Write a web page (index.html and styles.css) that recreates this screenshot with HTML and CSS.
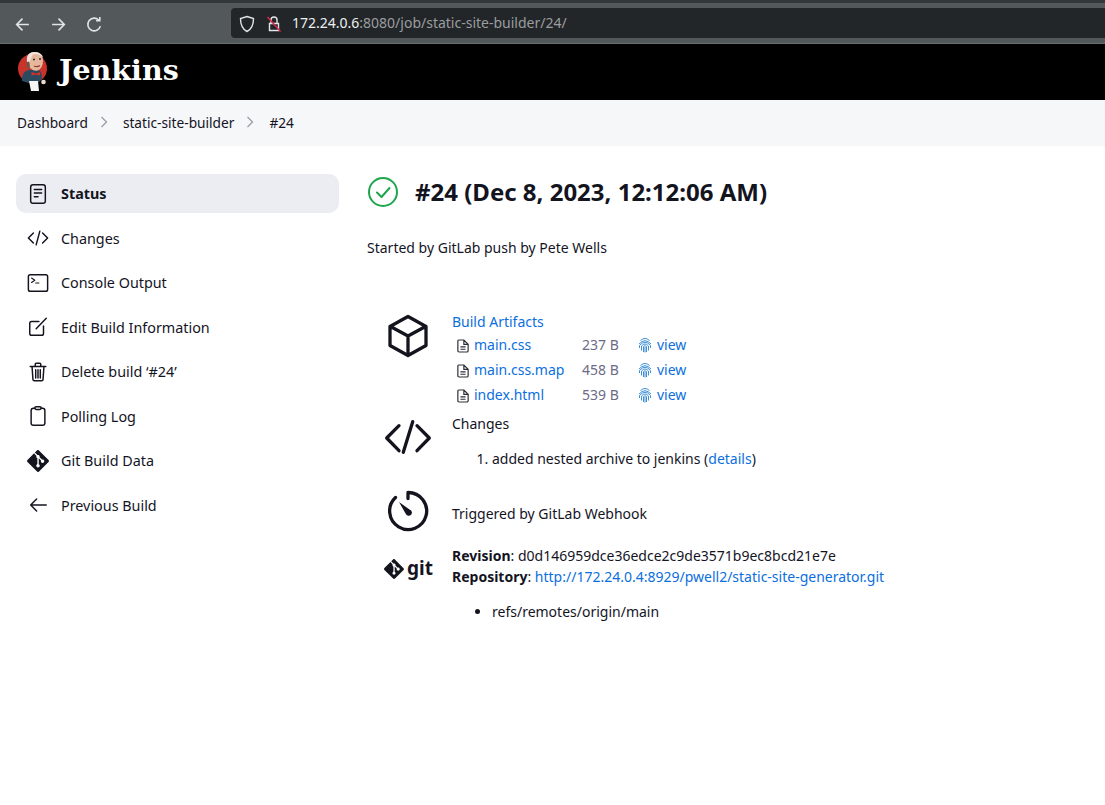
FILE: index.html
```html
<!DOCTYPE html>
<html lang="en">
<head>
    <meta charset="UTF-8">
    <meta name="viewport" content="width=device-width, initial-scale=1.0">
    <title>static-site-builder #24 [Jenkins]</title>
    <link rel="stylesheet" href="styles.css">
</head>
<body>
    <!-- browser chrome -->
    <div class="chrome">
        <div class="nav-btns">
            <svg class="chrome-icon" viewBox="0 0 16 16"><path d="M14 8H2.5M8 2.5 2.5 8 8 13.5"/></svg>
            <svg class="chrome-icon" viewBox="0 0 16 16"><path d="M2 8h11.500M8 2.500 13.500 8 8 13.500"/></svg>
            <svg class="chrome-icon" viewBox="0 0 16 16"><path d="M13.500 9.500A6 6 0 1 1 12 3.800M13 1v3.500H9.500"/></svg>
        </div>
        <div class="urlbar">
            <svg class="url-icon" viewBox="0 0 16 18"><path d="M8 1.500 14.500 3.500C14.500 10 13 14 8 16.500 3 14 1.500 10 1.500 3.500Z"/></svg>
            <svg class="url-icon lock" viewBox="0 0 16 18"><path d="M5 8V5a3 3 0 0 1 6 0v3M3.500 8.500h9v7h-9z"/><path class="slash" d="M1.500 2 14.500 16.500"/></svg>
            <span class="url"><span class="host">172.24.0.6</span>:8080/job/static-site-builder/24/</span>
        </div>
    </div>

    <header class="topbar">
        <svg class="logo" viewBox="0 0 30 40">
            <circle cx="14.500" cy="17.500" r="14.500" fill="#c8332b"/>
            <path d="M4 30c0-7 2-10 7-11h9c3 1 4 4 4 8l-3 4-8 0-2 1z" fill="#2b4a5f"/>
            <path d="M9 9.500C8.500 3.500 12 .8 17 1c5 .2 8 3.500 8 8.500 0 4-1 7-3.500 9-2.500 1.800-6 1.500-8-.5-2.500-1.500-4-4-4.500-8.500z" fill="#e6b79d"/>
            <path d="M9 11C8 4 12 .5 17 1c5 .2 7.500 3 8 5.500-3-3-7-4.500-10-3-1.500 1.500-2 5-3 6.500-.5 1-1.500 1.500-3 1z" fill="#efe3db"/>
            <path d="M9 11c-1 3 0 6 2.500 8 .5-3 .5-6-.5-8.500z" fill="#6d5449"/>
            <path d="M15 8.500h2M21 8h2" stroke="#3a2a24" stroke-width="1.300" fill="none"/>
            <path d="M16 15q3 1.500 6-.5" stroke="#8c3a30" stroke-width="1.200" fill="none"/>
            <path d="M13.500 21l4.500 1.500 4-1.500v3.500l-4-1-4.500 1z" fill="#d22f27"/>
            <path d="M11 30h9l1 10h-8z" fill="#f5f5f5"/>
            <circle cx="25.500" cy="31" r="2.300" fill="#e8ddd4"/>
        </svg>
        <span class="brand">Jenkins</span>
    </header>

    <nav class="crumbs">
        <a>Dashboard</a>
        <svg class="chev" viewBox="0 0 8 12"><path d="M1.500 1 6.500 6 1.500 11"/></svg>
        <a>static-site-builder</a>
        <svg class="chev" viewBox="0 0 8 12"><path d="M1.500 1 6.500 6 1.500 11"/></svg>
        <a>#24</a>
    </nav>

    <div class="page">
        <aside class="side">
            <a class="task active">
                <svg class="ti" viewBox="0 0 24 24"><rect x="4" y="2" width="16" height="20" rx="2.500"/><path d="M8 7h8M8 11h8M8 15h4"/></svg>
                <span>Status</span>
            </a>
            <a class="task">
                <svg class="ti" viewBox="0 0 24 24"><path d="M7 6.500 1.500 12 7 17.500M17 6.500 22.500 12 17 17.500M14 4.500 10 19.500"/></svg>
                <span>Changes</span>
            </a>
            <a class="task">
                <svg class="ti" viewBox="0 0 24 24"><rect x="1.500" y="3" width="21" height="18" rx="2"/><path d="M5 6.500 8.500 9 5 11.500M9.500 12H13" class="thin"/></svg>
                <span>Console Output</span>
            </a>
            <a class="task">
                <svg class="ti" viewBox="0 0 24 24"><path d="M13 6H5a2 2 0 0 0-2 2v11a2 2 0 0 0 2 2h11a2 2 0 0 0 2-2v-8"/><path d="M10 14 21 2.500"/></svg>
                <span>Edit Build Information</span>
            </a>
            <a class="task">
                <svg class="ti" viewBox="0 0 24 24"><path d="M3.500 6h17M9 6V3.500q0-1 1-1h4q1 0 1 1V6M5.500 6l1 14q.1 1.500 1.500 1.500h8q1.400 0 1.500-1.500l1-14M9.500 9.500v9M12 9.500v9M14.500 9.500v9"/></svg>
                <span>Delete build ‘#24’</span>
            </a>
            <a class="task">
                <svg class="ti" viewBox="0 0 24 24"><path d="M8.500 3.500H7q-2.500 0-2.500 2.500v13.500q0 2.500 2.500 2.500h10q2.500 0 2.500-2.500V6q0-2.500-2.500-2.500h-1.500"/><rect x="8.500" y="1.800" width="7" height="3" rx="1.500"/></svg>
                <span>Polling Log</span>
            </a>
            <a class="task">
                <svg class="ti" viewBox="0 0 92 92"><path class="solid" d="M90 42 50 2c-2.500-2.500-6-2.500-8.500 0l-8.300 8.300 10.500 10.500c2.500-.8 5.300-.3 7.300 1.700s2.500 4.900 1.700 7.400l10.100 10.100c2.500-.8 5.400-.3 7.400 1.700 2.800 2.800 2.800 7.300 0 10.100s-7.300 2.800-10.100 0c-2.100-2.100-2.600-5.200-1.500-7.800l-9.400-9.400v24.700c.7.300 1.300.8 1.900 1.300 2.800 2.800 2.800 7.300 0 10.100s-7.300 2.800-10.100 0-2.800-7.300 0-10.100c.7-.7 1.500-1.200 2.300-1.600V34.400c-.8-.4-1.600-.9-2.300-1.600-2.100-2.100-2.600-5.200-1.500-7.800L29.700 14 2 41.700c-2.500 2.500-2.500 6 0 8.500l40 40c2.500 2.500 6 2.500 8.500 0L90 50.500c2.500-2.500 2.500-6 0-8.500z"/></svg>
                <span>Git Build Data</span>
            </a>
            <a class="task">
                <svg class="ti" viewBox="0 0 24 24"><path d="M21 12H4M10.500 5.500 4 12l6.500 6.500"/></svg>
                <span>Previous Build</span>
            </a>
        </aside>

        <main class="main">
            <h1 class="title">
                <svg class="ok" viewBox="0 0 32 32"><circle cx="16" cy="16" r="14"/><path d="M10 16.500 14.500 21 22.500 12"/></svg>
                <span>#24 (Dec 8, 2023, 12:12:06 AM)</span>
            </h1>
            <p class="started">Started by GitLab push by Pete Wells</p>

            <div class="rows">
                <section class="row artifacts-row">
                    <svg class="big" viewBox="0 0 44 44"><path d="M22 2.500 40 12.500v19L22 41.500 4 31.500v-19zM4.500 12.500 22 22l17.500-9.500M22 22v19"/></svg>
                    <div class="body">
                        <a class="link">Build Artifacts</a>
                        <table class="files">
                            <tr>
                                <td class="f-ic"><svg class="doc" viewBox="0 0 14 16"><path d="M2 1h6l5 5v7.500q0 1.500-1.500 1.500h-9Q1 15 1 13.500V2.500Q1 1 2 1zM8 1v5h5M4 9h6M4 11.800h6"/></svg></td>
                                <td class="f-name"><a class="link">main.css</a></td>
                                <td class="f-size">237 B</td>
                                <td class="f-view"><svg class="fp" viewBox="0 0 14 16"><path d="M2.500 3.500Q7-.5 11.500 3.500M1 7Q7 .5 13 7M1.500 11V8.500Q7 2 12.500 8.500V11M3.500 13.500V9Q7 5 10.500 9v4.500M5.500 15V9.500Q7 8 8.500 9.500V15M7 10v5.500"/></svg><a class="link">view</a></td>
                            </tr>
                            <tr>
                                <td class="f-ic"><svg class="doc" viewBox="0 0 14 16"><path d="M2 1h6l5 5v7.500q0 1.500-1.500 1.500h-9Q1 15 1 13.500V2.500Q1 1 2 1zM8 1v5h5M4 9h6M4 11.800h6"/></svg></td>
                                <td class="f-name"><a class="link">main.css.map</a></td>
                                <td class="f-size">458 B</td>
                                <td class="f-view"><svg class="fp" viewBox="0 0 14 16"><path d="M2.500 3.500Q7-.5 11.500 3.500M1 7Q7 .5 13 7M1.500 11V8.500Q7 2 12.500 8.500V11M3.500 13.500V9Q7 5 10.500 9v4.500M5.500 15V9.500Q7 8 8.500 9.500V15M7 10v5.500"/></svg><a class="link">view</a></td>
                            </tr>
                            <tr>
                                <td class="f-ic"><svg class="doc" viewBox="0 0 14 16"><path d="M2 1h6l5 5v7.500q0 1.500-1.500 1.500h-9Q1 15 1 13.500V2.500Q1 1 2 1zM8 1v5h5M4 9h6M4 11.800h6"/></svg></td>
                                <td class="f-name"><a class="link">index.html</a></td>
                                <td class="f-size">539 B</td>
                                <td class="f-view"><svg class="fp" viewBox="0 0 14 16"><path d="M2.500 3.500Q7-.5 11.500 3.500M1 7Q7 .5 13 7M1.500 11V8.500Q7 2 12.500 8.500V11M3.500 13.500V9Q7 5 10.500 9v4.500M5.500 15V9.500Q7 8 8.500 9.500V15M7 10v5.500"/></svg><a class="link">view</a></td>
                            </tr>
                        </table>
                    </div>
                </section>

                <section class="row changes-row">
                    <svg class="big code" viewBox="0 0 46 34"><path d="M14 5.700 1.700 18 14 30.700M32 5.700 44.300 18 32 30.700M27.700 1.700 18.300 32.300"/></svg>
                    <div class="body">
                        <div>Changes</div>
                        <ol class="list">
                            <li>added nested archive to jenkins (<a class="link">details</a>)</li>
                        </ol>
                    </div>
                </section>

                <section class="row trigger-row">
                    <svg class="big" viewBox="0 0 44 44"><path d="M22 3.500A18.500 18.500 0 1 1 9.500 8.500M22 3.500v6"/><path class="solid" d="M13 13l10.500 7.500a3.200 3.200 0 1 1-3.800 4.200z"/></svg>
                    <div class="body">Triggered by GitLab Webhook</div>
                </section>

                <section class="row git-row">
                    <span class="git-logo">
                        <svg class="git-mark" viewBox="0 0 92 92"><path class="solid" d="M90 42 50 2c-2.500-2.500-6-2.500-8.500 0l-8.300 8.300 10.500 10.500c2.500-.8 5.300-.3 7.300 1.700s2.500 4.900 1.700 7.400l10.100 10.100c2.500-.8 5.400-.3 7.400 1.700 2.800 2.800 2.800 7.300 0 10.100s-7.300 2.800-10.100 0c-2.100-2.100-2.600-5.200-1.500-7.800l-9.400-9.400v24.700c.7.300 1.300.8 1.900 1.300 2.800 2.800 2.800 7.300 0 10.100s-7.300 2.800-10.100 0-2.800-7.300 0-10.100c.7-.7 1.500-1.200 2.300-1.600V34.400c-.8-.4-1.600-.9-2.300-1.600-2.100-2.100-2.600-5.200-1.500-7.800L29.700 14 2 41.700c-2.500 2.500-2.500 6 0 8.500l40 40c2.500 2.500 6 2.500 8.500 0L90 50.500c2.500-2.500 2.500-6 0-8.500z"/></svg>
                        <b>git</b>
                    </span>
                    <div class="body">
                        <div class="rev"><b>Revision</b>: d0d146959dce36edce2c9de3571b9ec8bcd21e7e</div>
                        <div class="rev"><b>Repository</b>: <a class="link">http://172.24.0.4:8929/pwell2/static-site-generator.git</a></div>
                        <ul class="list refs">
                            <li>refs/remotes/origin/main</li>
                        </ul>
                    </div>
                </section>
            </div>
        </main>
    </div>
</body>
</html>
```

FILE: styles.css
```css
*{margin:0;padding:0;box-sizing:border-box}
html,body{height:100%;overflow:hidden}
body{background:#fff;color:#14141f;font-family:"Noto Sans",sans-serif;font-size:14px;line-height:21px}
svg{display:block;flex:none}

/* browser chrome */
.chrome{height:44px;display:flex;align-items:center;padding:0 0 1px 14px;background:#53585a;border-top:3px solid #33373a;border-bottom:1px solid #696e70}
.nav-btns{display:flex;gap:19px;width:217px;margin-top:3px}
.chrome-icon{width:17px;height:17px;fill:none;stroke:#e2e4e5;stroke-width:1.5}
.urlbar{flex:1;height:30px;background:#222629;border-radius:4px 0 0 4px;display:flex;align-items:center;padding-left:8px}
.url-icon{width:16px;height:18px;margin-top:2px;fill:none;stroke:#e2e4e5;stroke-width:1.4}
.lock{margin-left:11px}
.slash{stroke:#e0274f}
.url{margin-left:10px;color:#9a9d9f;font-size:14px}
.host{color:#eceeef}

.topbar{height:56px;background:#000;display:flex;align-items:center;padding:0 0 2px 18px}
.logo{width:30px;height:40px}
.brand{margin:0 0 2px 11px;color:#fff;font-family:"DejaVu Serif",serif;font-weight:700;font-size:28.500px}

.crumbs{height:46px;background:#f6f7f9;display:flex;align-items:center;padding:0 0 2px 17px;font-size:13.700px}
.chev{width:8px;height:12px;margin:0 15px 0 12px;fill:none;stroke:#9a9ca8;stroke-width:1.300}

.page{display:flex;padding:28px 0 0 16px}
.side{width:323px;flex:none;display:flex;flex-direction:column;gap:5.500px;font-size:14.350px}
.task{height:39px;display:flex;align-items:center;padding-left:11px;border-radius:10px}
.task span{margin-left:12px}
.task.active{background:#ebedf2;font-weight:700}
.ti{width:22px;height:22px;fill:none;stroke:#14141f;stroke-width:1.600;stroke-linecap:round;stroke-linejoin:round}
.ti .thin{stroke-width:1.200}
.solid{fill:#14141f;stroke:none}

.main{padding-left:28px;flex:1}
.title{display:flex;align-items:center;font-size:24px;font-weight:700;line-height:38px;margin-top:-1px}
.ok{width:32px;height:32px;fill:none;stroke:#1ea64d;stroke-width:2;stroke-linecap:round;stroke-linejoin:round;margin-right:16px}
.started{margin-top:26px}

.link{color:#0b6fde}
.rows{margin-top:53px;display:flex;flex-direction:column}
.row{display:flex;align-items:flex-start}
.big{fill:none;stroke:#14141f;stroke-width:3.300;stroke-linecap:round;stroke-linejoin:round;width:44px;height:44px;margin:0 22px 0 19px}
.body{flex:1}
.artifacts-row .big{margin-top:3px}
.files{border-collapse:collapse}
.files td{height:25px;padding:0;vertical-align:middle}
.f-ic{width:22px}
.doc{width:12px;height:14px;fill:none;stroke:#2e2e38;stroke-width:1.400;margin:2px 0 0 5px}
.f-name{width:108px}
.f-size{width:56px;color:#6d6b85}
.f-view{display:flex;align-items:center;height:25px}
.fp{width:14px;height:16px;fill:none;stroke:#3d8fd6;stroke-width:1;margin-right:5px}

.changes-row{margin-top:6px}
.big.code{width:46px;height:34px;margin:7px 21px 0 18px;overflow:visible}
.list{margin-top:14px;padding-left:40px}

.trigger-row{margin-top:20px;align-items:center}
.trigger-row .big{margin-bottom:4px}
.git-row{margin-top:8px}
.git-logo{display:flex;align-items:center;width:85px;padding:13px 0 0 17px}
.git-mark{width:20px;height:20px}
.git-logo b{margin-left:3px;font-size:19px;font-weight:700}
.rev{line-height:21px}
.refs{margin-top:14px}
```
